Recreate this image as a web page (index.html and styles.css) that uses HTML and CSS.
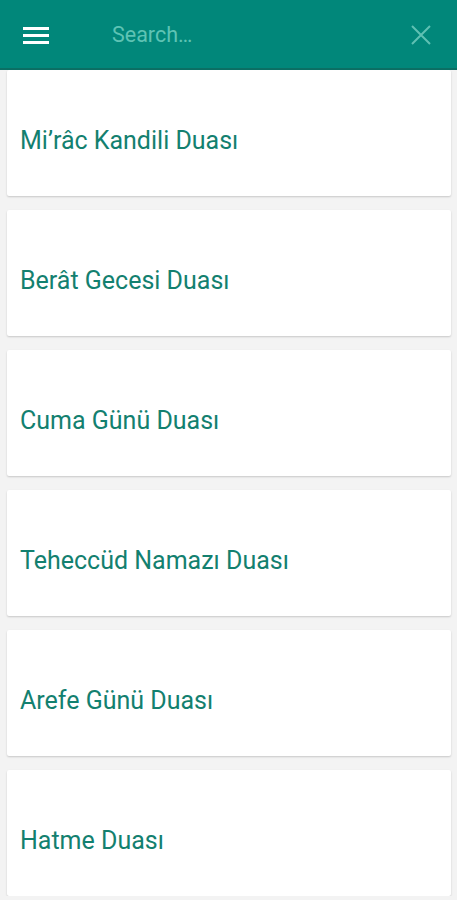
FILE: index.html
```html
<!DOCTYPE html>
<html lang="tr">
<head>
    <meta charset="UTF-8">
    <meta name="viewport" content="width=device-width, initial-scale=1.0">
    <title>Dualar</title>
    <link rel="stylesheet" href="styles.css">
</head>
<body>
    <header class="toolbar">
        <button class="icon-btn menu-btn" aria-label="Menu">
            <svg width="26" height="20" viewBox="0 0 26 20"><path d="M0 2h26v3H0zM0 9h26v3H0zM0 16h26v3H0z" fill="#ffffff"/></svg>
        </button>
        <input type="text" class="search" placeholder="Search…">
        <button class="icon-btn close-btn" aria-label="Clear">
            <svg width="20" height="20" viewBox="0 0 20 20"><path d="M1 1L19 19M19 1L1 19" stroke="#5fc0b3" stroke-width="2" fill="none"/></svg>
        </button>
    </header>

    <ul class="list">
        <li class="card">Mi’râc Kandili Duası</li>
        <li class="card">Berât Gecesi Duası</li>
        <li class="card">Cuma Günü Duası</li>
        <li class="card">Teheccüd Namazı Duası</li>
        <li class="card">Arefe Günü Duası</li>
        <li class="card">Hatme Duası</li>
    </ul>
</body>
</html>
```

FILE: styles.css
```css
body {
    margin: 0;
    background-color: #f3f3f3;
    font-family: Roboto, "Noto Sans", Arial, sans-serif;
    overflow: hidden;
}
.toolbar {
    height: 67px;
    background-color: #01877a;
    border-bottom: 2px solid #0b6f64;
    display: flex;
    align-items: center;
    padding: 1px 14px 0 23px;
}
.icon-btn {
    background: none;
    border: none;
    padding: 0;
    cursor: pointer;
    display: flex;
}
.search {
    flex: 1;
    margin-left: 63px;
    background: transparent;
    border: none;
    outline: none;
    font-family: inherit;
    font-size: 21.5px;
    color: #ffffff;
    padding: 0;
}
.search::placeholder {
    color: #5ec3b4;
}
.close-btn {
    margin-right: 12px;
}
.list {
    list-style: none;
    margin: 0;
    padding: 0 6px 0 7px;
    display: flex;
    flex-direction: column;
    gap: 14px;
}
.card {
    height: 126px;
    box-sizing: border-box;
    background-color: #ffffff;
    border-radius: 2px;
    box-shadow: 0 1px 2px rgba(0, 0, 0, 0.18);
    padding: 57px 0 0 13px;
    font-size: 25px;
    line-height: 28px;
    color: #13806f;
}
```
